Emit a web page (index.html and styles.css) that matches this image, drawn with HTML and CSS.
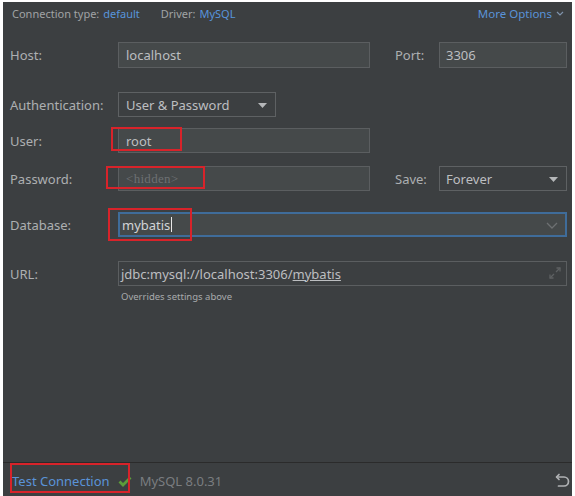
FILE: index.html
```html
<!DOCTYPE html>
<html>
<head>
<meta charset="utf-8">
<link rel="stylesheet" href="styles.css">
</head>
<body>
<div class="window">
  <div class="panel">
    <div class="topbar">
      <div class="meta">
        <span class="key">Connection type:</span><span class="link">default</span>
        <span class="key driver">Driver:</span><span class="link">MySQL</span>
      </div>
      <div class="more">More Options
        <svg class="more-chev" width="8" height="6" viewBox="0 0 8 6"><polyline points="1,1 4,4 7,1" fill="none" stroke="#7f93ab" stroke-width="1.2"/></svg>
      </div>
    </div>

    <div class="form">
      <div class="row row-host">
        <div class="lbl">Host:</div>
        <div class="field w-main">localhost</div>
        <div class="lbl2">Port:</div>
        <div class="field grow pad6">3306</div>
      </div>

      <div class="row row-auth">
        <div class="lbl">Authentication:</div>
        <div class="field select w-auth">User &amp; Password
          <svg class="tri" width="9" height="5" viewBox="0 0 9 5"><polygon points="0,0 9,0 4.5,5" fill="#b5b7b9"/></svg>
        </div>
      </div>

      <div class="row row-user">
        <div class="lbl">User:</div>
        <div class="field w-main value">root</div>
      </div>

      <div class="row row-pass">
        <div class="lbl">Password:</div>
        <div class="field w-main placeholder">&lt;hidden&gt;</div>
        <div class="lbl2">Save:</div>
        <div class="field select grow pad6">Forever
          <svg class="tri" width="9" height="5" viewBox="0 0 9 5"><polygon points="0,0 9,0 4.5,5" fill="#b5b7b9"/></svg>
        </div>
      </div>

      <div class="row row-db">
        <div class="lbl">Database:</div>
        <div class="field grow focused">
          <span class="dbval">mybatis</span><span class="caret"></span>
          <svg class="db-chev" width="12" height="7" viewBox="0 0 12 7"><polyline points="1,1 6,6 11,1" fill="none" stroke="#6d7072" stroke-width="1.3"/></svg>
        </div>
      </div>

      <div class="row row-url">
        <div class="lbl">URL:</div>
        <div class="field grow url">jdbc:mysql://localhost:3306/<span class="ul">mybatis</span>
          <svg class="expand" width="14" height="14" viewBox="0 0 14 14">
            <g fill="none" stroke="#5d6062" stroke-width="1.3">
              <line x1="2" y1="12" x2="6" y2="8"/>
              <polyline points="2,8.5 2,12 5.5,12"/>
              <line x1="8" y1="6" x2="12" y2="2"/>
              <polyline points="8.5,2 12,2 12,5.5"/>
            </g>
          </svg>
        </div>
      </div>
      <div class="hint">Overrides settings above</div>
    </div>

    <div class="footer">
      <div class="footer-left">
        <span class="test">Test Connection</span>
        <svg class="check" width="14" height="11" viewBox="0 0 14 11"><polyline points="1.5,5.5 5,9 12.5,1.5" fill="none" stroke="#5d9d3a" stroke-width="2.8"/></svg>
        <span class="version">MySQL 8.0.31</span>
      </div>
      <svg class="undo" width="15" height="15" viewBox="0 0 15 15">
        <g fill="none" stroke="#b0b2b4" stroke-width="1.7" stroke-linecap="round" stroke-linejoin="round">
          <polyline points="4,1.5 1.5,4 4,6.5"/>
          <path d="M1.8 4 H9 A4.5 4.5 0 0 1 9 13 H3.5"/>
        </g>
      </svg>
    </div>
  </div>

  <div class="mark mark-user"></div>
  <div class="mark mark-pass"></div>
  <div class="mark mark-db"></div>
  <div class="mark mark-test"></div>
</div>
</body>
</html>
```

FILE: styles.css
```css
* { box-sizing: border-box; }

html, body {
  margin: 0;
  padding: 0;
  background: #ffffff;
}

body {
  font-family: "Noto Sans", "Liberation Sans", sans-serif;
  width: 575px;
  height: 496px;
  overflow: hidden;
}

.window {
  position: relative;
  width: 575px;
  height: 496px;
  padding: 2px 3px 0 3px;
}

.panel {
  background: #3c3f41;
  height: 494px;
  display: flex;
  flex-direction: column;
  color: #adafb1;
}

.topbar {
  height: 23px;
  display: flex;
  align-items: center;
  justify-content: space-between;
  padding: 0 9px 0 9px;
  font-size: 11px;
}

.meta .key { color: #a0a3a5; margin-right: 4px; }
.meta .driver { margin-left: 18px; }
.link { color: #5895dc; }

.more {
  color: #5a93d8;
  font-size: 11.5px;
  display: flex;
  align-items: center;
  gap: 4px;
  margin-right: -1px;
}

.form {
  padding: 0 5px 0 7px;
}

.row {
  display: flex;
  align-items: center;
  height: 25px;
}

.row-host { margin-top: 17px; height: 26px; }
.row-auth { margin-top: 24px; }
.row-user { margin-top: 11px; }
.row-pass { margin-top: 13px; }
.row-db   { margin-top: 21px; }
.row-url  { margin-top: 24px; }

.lbl {
  width: 108px;
  font-size: 13px;
  color: #adafb1;
  flex: none;
}

.lbl2 {
  width: 69px;
  padding-left: 25px;
  font-size: 13px;
  color: #adafb1;
  flex: none;
}

.field {
  position: relative;
  height: 100%;
  background: #45494a;
  border: 1px solid #5b5e60;
  display: flex;
  align-items: center;
  padding-left: 7px;
  font-size: 13px;
  color: #bcbec0;
  white-space: nowrap;
}

.w-main { width: 252px; flex: none; }
.w-auth { width: 158px; flex: none; }
.grow { flex: 1; }
.pad6 { padding-left: 6px; }

.select {
  background: #3c3f41;
  border-color: #5e6163;
}

.tri {
  position: absolute;
  right: 8px;
  top: 10px;
}

.placeholder {
  font-family: "Liberation Serif", serif;
  font-size: 13px;
  color: #6d7072;
  letter-spacing: 0.3px;
}

.focused {
  border: 2px solid #3f6c9a;
  padding-left: 2px;
  color: #d2d4d6;
}

.caret {
  display: inline-block;
  width: 1px;
  height: 15px;
  background: #e8e8e8;
  margin-left: 1px;
}

.db-chev {
  position: absolute;
  right: 7px;
  top: 8px;
}

.url {
  padding-left: 2px;
  background: #3c3f41;
}

.ul { text-decoration: underline; }

.expand {
  position: absolute;
  right: 4px;
  top: 4px;
}

.hint {
  margin: 3px 0 0 111px;
  font-size: 9.5px;
  line-height: 16px;
  color: #a9abad;
}

.footer {
  margin-top: auto;
  height: 34px;
  border-top: 1px solid #2b2b2b;
  display: flex;
  align-items: center;
  justify-content: space-between;
  padding: 3px 2px 0 9px;
}

.footer-left {
  display: flex;
  align-items: center;
}

.test {
  color: #5a93d8;
  font-size: 13px;
}

.check { margin-left: 8px; }

.version {
  margin-left: 8px;
  color: #7a7d80;
  font-size: 13px;
}

.undo { margin-top: -2px; }

.mark {
  position: absolute;
  border: 2px solid #d8232a;
}

.mark-user { left: 111px; top: 127px; width: 71px; height: 24px; }
.mark-pass { left: 106px; top: 166px; width: 99px; height: 23px; }
.mark-db   { left: 108px; top: 208px; width: 84px; height: 33px; }
.mark-test { left: 10px; top: 463px; width: 120px; height: 30px; }
```
